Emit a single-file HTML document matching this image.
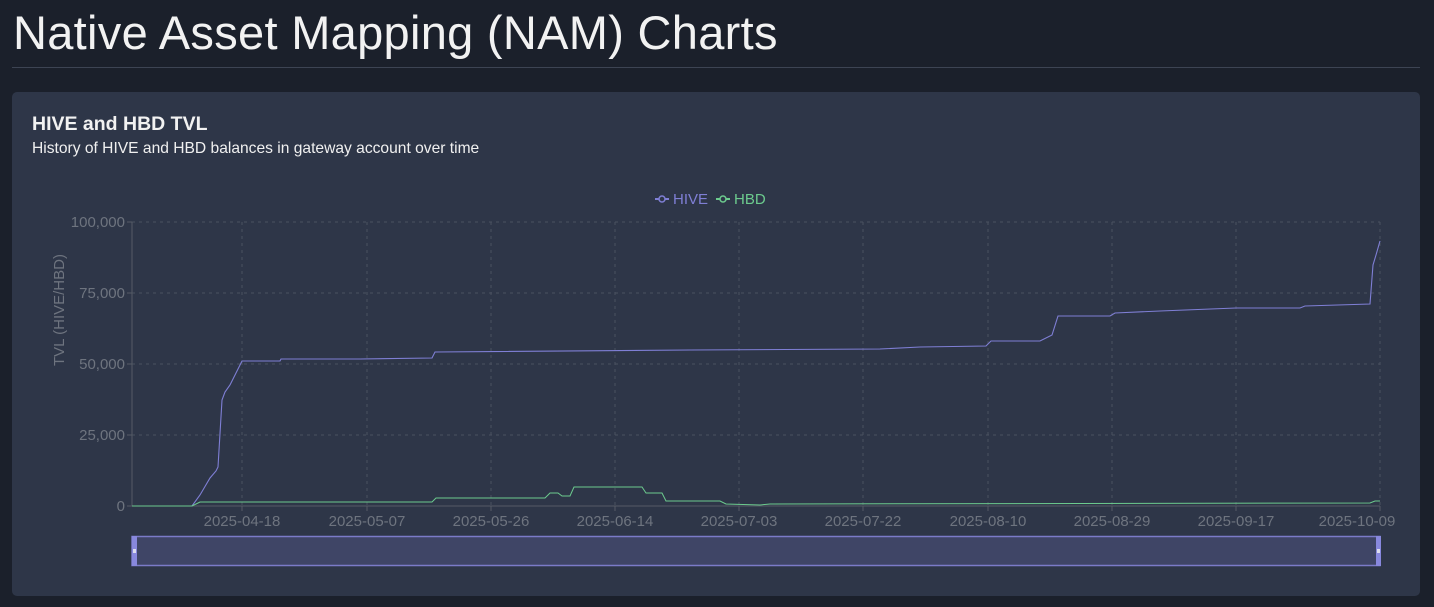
<!DOCTYPE html>
<html><head><meta charset="utf-8"><style>
html,body{margin:0;padding:0;background:#1b202b;width:1434px;height:607px;overflow:hidden;font-family:"Liberation Sans",sans-serif;}
h1{position:absolute;left:13px;top:5px;margin:0;font-weight:normal;font-size:47px;color:#f2f2f2;letter-spacing:0.3px;white-space:nowrap;}
.hr{position:absolute;left:12px;top:67px;width:1408px;height:1px;background:#3d4453;}
.card{position:absolute;left:12px;top:92px;width:1408px;height:504px;background:#2e3648;border-radius:5px;}
.t{position:absolute;left:32px;top:113px;font-size:19.5px;font-weight:bold;color:#f2f2f2;}
.s{position:absolute;left:32px;top:140px;font-size:15.6px;color:#f0f0f0;}
svg{position:absolute;left:0;top:0;}
</style></head><body>
<h1>Native Asset Mapping (NAM) Charts</h1>
<div class="hr"></div>
<div class="card"></div>
<div class="t">HIVE and HBD TVL</div>
<div class="s">History of HIVE and HBD balances in gateway account over time</div>
<svg width="1434" height="607" font-family="Liberation Sans, sans-serif">
<g stroke="#4a5160" stroke-dasharray="3,4" stroke-width="1" fill="none">
<line x1="132" y1="222" x2="1380" y2="222"/><line x1="132" y1="293" x2="1380" y2="293"/>
<line x1="132" y1="364" x2="1380" y2="364"/><line x1="132" y1="435" x2="1380" y2="435"/>
<line x1="242" y1="222" x2="242" y2="506"/><line x1="367" y1="222" x2="367" y2="506"/>
<line x1="491" y1="222" x2="491" y2="506"/><line x1="615" y1="222" x2="615" y2="506"/>
<line x1="739" y1="222" x2="739" y2="506"/><line x1="863" y1="222" x2="863" y2="506"/>
<line x1="988" y1="222" x2="988" y2="506"/><line x1="1112" y1="222" x2="1112" y2="506"/>
<line x1="1236" y1="222" x2="1236" y2="506"/><line x1="1380" y1="222" x2="1380" y2="506"/>
</g>
<g stroke="#555b66" stroke-width="1">
<line x1="132" y1="222" x2="132" y2="506"/><line x1="132" y1="506" x2="1380" y2="506"/>
<line x1="127" y1="222" x2="132" y2="222"/><line x1="127" y1="293" x2="132" y2="293"/><line x1="127" y1="364" x2="132" y2="364"/><line x1="127" y1="435" x2="132" y2="435"/><line x1="127" y1="506" x2="132" y2="506"/>
<line x1="242" y1="506" x2="242" y2="511"/><line x1="367" y1="506" x2="367" y2="511"/><line x1="491" y1="506" x2="491" y2="511"/><line x1="615" y1="506" x2="615" y2="511"/><line x1="739" y1="506" x2="739" y2="511"/><line x1="863" y1="506" x2="863" y2="511"/><line x1="988" y1="506" x2="988" y2="511"/><line x1="1112" y1="506" x2="1112" y2="511"/><line x1="1236" y1="506" x2="1236" y2="511"/><line x1="1380" y1="506" x2="1380" y2="511"/>
</g>
<g fill="#6e747f" font-size="15" text-anchor="end">
<text x="125" y="227">100,000</text><text x="125" y="298">75,000</text><text x="125" y="369">50,000</text><text x="125" y="440">25,000</text><text x="125" y="511">0</text>
</g>
<g fill="#6e747f" font-size="15" text-anchor="middle">
<text x="242" y="526">2025-04-18</text><text x="367" y="526">2025-05-07</text><text x="491" y="526">2025-05-26</text><text x="615" y="526">2025-06-14</text><text x="739" y="526">2025-07-03</text><text x="863" y="526">2025-07-22</text><text x="988" y="526">2025-08-10</text><text x="1112" y="526">2025-08-29</text><text x="1236" y="526">2025-09-17</text><text x="1357" y="526">2025-10-09</text>
</g>
<text x="64" y="310" transform="rotate(-90 64 310)" fill="#6e747f" font-size="15" text-anchor="middle">TVL (HIVE/HBD)</text>
<polyline fill="none" stroke="#7f7fd5" stroke-width="1.1" points="132,506 192,506 200,495 210,478 216,471 218,467 222,400 225,392 230,385 242,361 280,361 281,359 360,359 432,358 435,352 690,350 880,349 920,347 986,346 991,341 1040,341 1052,335 1058,316 1110,316 1115,313 1160,311 1236,308 1300,308 1305,306 1370,304 1373,265 1376,255 1380,241"/>
<polyline fill="none" stroke="#6ccb8e" stroke-width="1" points="132,506 192,506 200,502 432,502 436,498 545,498 550,493 558,493 562,496 570,496 574,487 642,487 646,493 662,493 666,501 720,501 726,504 760,505 770,504 1370,503 1375,501 1380,501"/>
<g font-size="15">
<line x1="655" y1="199" x2="669" y2="199" stroke="#7f7fd5" stroke-width="2"/><circle cx="662" cy="199" r="3" fill="#2e3648" stroke="#7f7fd5" stroke-width="1.5"/>
<text x="673" y="204" fill="#7f7fd5">HIVE</text>
<line x1="716" y1="199" x2="730" y2="199" stroke="#6ccb8e" stroke-width="2"/><circle cx="723" cy="199" r="3" fill="#2e3648" stroke="#6ccb8e" stroke-width="1.5"/>
<text x="734" y="204" fill="#6ccb8e">HBD</text>
</g>
<rect x="132" y="536.5" width="1248" height="29" fill="#3f4566" stroke="#7b7bc8" stroke-width="1.5"/>
<rect x="132" y="536" width="5" height="30" fill="#8888dd"/>
<rect x="1376" y="536" width="5" height="30" fill="#8888dd"/>
<rect x="133" y="549" width="3" height="4" fill="#dde"/>
<rect x="1377" y="549" width="3" height="4" fill="#dde"/>
</svg>
</body></html>
